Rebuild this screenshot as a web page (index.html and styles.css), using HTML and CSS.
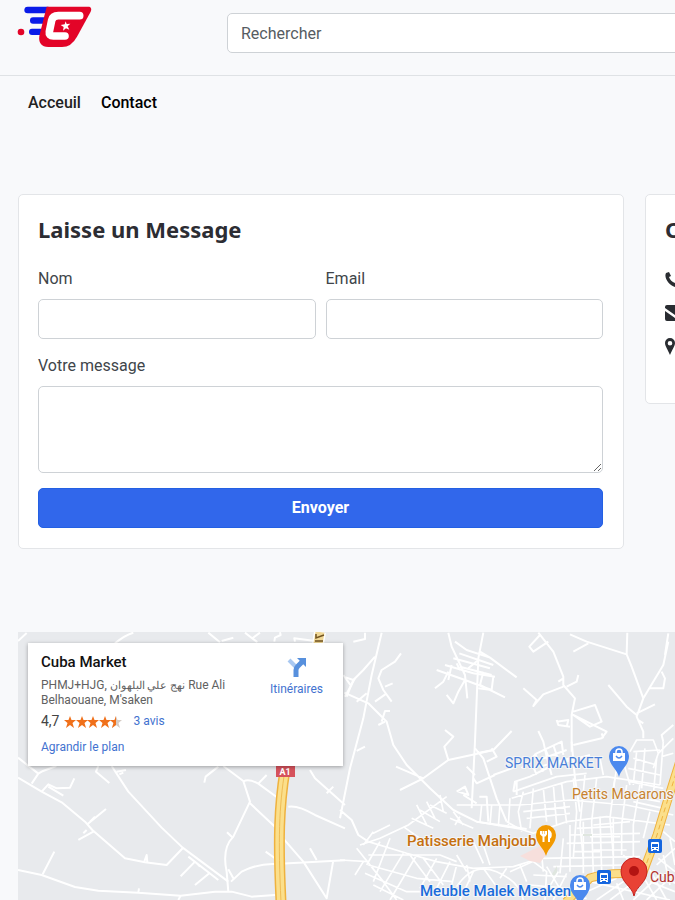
FILE: index.html
```html
<!DOCTYPE html>
<html lang="fr">
<head>
<meta charset="utf-8">
<meta name="viewport" content="width=device-width, initial-scale=1">
<title>Contact</title>
<link rel="stylesheet" href="styles.css">
</head>
<body>
<div class="page">
  <header class="header">
    <a class="logo" href="#" aria-label="Accueil">
      <svg width="76" height="44" viewBox="0 0 228 132">
        <g fill="#0a1be8"><rect x="19" y="2" width="80" height="20" rx="10"/><rect x="36" y="34" width="50" height="19" rx="9"/><rect x="33" y="68" width="50" height="19" rx="9"/></g>
        <circle cx="9" cy="78" r="10" fill="#e30428"/>
        <path fill="#e30428" d="M86 2H214Q223 6 218 17L177 92Q160 123 132 123H91Q60 122 64 90Z"/>
        <path fill="none" stroke="#fff" stroke-width="23" stroke-linecap="round" stroke-linejoin="round" d="M185 29H121Q104 29 101 43L94 77Q92 90 106 90H141"/>
        <path fill="#fff" d="M143 46l3 8 11-1-8 8 5 10-10-4-9 7 2-11-9-6 12-2z"/>
      </svg>
    </a>
    <input class="search" type="search" placeholder="Rechercher" aria-label="Rechercher">
  </header>

  <nav class="nav">
    <a href="#">Acceuil</a>
    <a class="active" href="#">Contact</a>
  </nav>

  <main class="main">
    <div class="cards">
      <form class="card">
        <h2>Laisse un Message</h2>
        <div class="fields">
          <div class="field"><label for="nom">Nom</label><input id="nom" type="text"></div>
          <div class="field"><label for="email">Email</label><input id="email" type="email"></div>
        </div>
        <div class="field"><label for="message">Votre message</label><textarea id="message"></textarea></div>
        <button class="send" type="button">Envoyer</button>
      </form>
      <aside class="card info">
        <h2>C</h2>
        <ul>
          <li><svg width="16" height="16" viewBox="0 0 16 16"><path d="M4 0 1 1C-2 7 7 17 14 15l2-3-4-3-2 2C7 10 5 8 4 5l2-1z"/></svg></li>
          <li><svg width="20" height="16" viewBox="0 0 20 16"><path d="M2 0H18Q20 0 20 2V3L10 10 0 3V2Q0 0 2 0ZM0 6l10 7 10-7v8q0 2-2 2H2q-2 0-2-2Z"/></svg></li>
          <li><svg width="10" height="17" viewBox="0 0 10 17"><path fill-rule="evenodd" d="M5 0a5 5 0 0 1 5 5c0 3-3 7-5 12C3 12 0 8 0 5a5 5 0 0 1 5-5Zm0 3a2.3 2.3 0 1 0 0 4.600 2.300 2.300 0 0 0 0-4.600Z"/></svg></li>
        </ul>
      </aside>
    </div>

    <section class="map" aria-label="Plan">
      <svg class="tiles" viewBox="18 632 930 268" preserveAspectRatio="xMinYMin slice">
        <defs>
          <path id="pin" d="M0 31C-2 23-10 19-10 10a10 10 0 0 1 20 0C10 19 2 23 0 31Z"/>
          <g id="bag"><path fill="#fff" d="M-6 7H6V15H-6Z"/><path fill="none" stroke="#fff" stroke-width="1.500" d="M-3 7V6a3 3 0 0 1 6 0V7"/><path fill="none" stroke="#4b89ee" stroke-width="1.300" d="M-3 10q3 4 6 0"/></g>
          <g id="bus"><rect x="-7" y="-7" width="14" height="14" rx="2" fill="#1566df"/><rect x="-4" y="-4" width="8" height="8" rx="1" fill="#fff"/><path fill="#1566df" d="M-3-2H3V1H-3ZM-3 2H-1V3H-3ZM1 2H3V3H1Z"/><path fill="#fff" d="M-4 4H-2V5H-4ZM2 4H4V5H2Z"/></g>
        </defs>

        <!-- western roads -->
        <g class="roads" transform="translate(15 625) scale(.3333)">
          <path d="M9 48 35 24M300 55Q330 30 355 23M580 23 615 52M620 48 655 38M690 23 725 50 712 40 735 23M778 50 780 38 797 30 795 22M840 50 838 40 900 48M985 150 1010 185M990 215 1020 160"/>
          <path d="M9 398 70 446 84 438 124 423M9 458 80 500 140 532 210 590 232 615 330 700 390 712 455 720 503 670M70 446 50 476M80 500 100 478 125 490 165 488 178 460M100 485 145 512M218 597 273 552M225 590 240 575M235 620 190 645M215 615 205 625M83 748 118 680"/>
          <path d="M250 423 243 440 283 474M290 423 340 500 440 608 503 668 640 770M305 440 333 435M313 448 325 443M520 695 610 765M540 710 497 754M540 710 555 725M583 745 540 780M388 710 395 690 397 712"/>
          <path d="M625 423 685 468 705 530 655 635Q620 670 635 740L640 800M568 473 572 455 610 425M685 470Q700 460 730 476L790 520M730 476 755 450M705 535 780 605M636 622 655 640M648 770 680 740Q730 715 780 717L990 706M640 733 655 760M9 735 80 750 180 786 250 797 370 803 497 812 600 800 650 800 710 815 780 810M370 803 372 790M497 812 490 825M807 643 865 710 935 820 955 706M820 545Q850 540 900 570L990 610M885 670 905 705M752 680 780 700M885 435 900 460 990 540M935 505 955 485"/>
        </g>

        <!-- northern and central roads -->
        <g class="roads" transform="translate(340 625) scale(.3333)">
          <path d="M125 23 95 150 70 280 30 430 0 580M105 95 70 135 40 165 20 215M17 157 40 165M40 50 75 42V23M183 85 165 110 125 135 115 160 130 195 155 230M135 185 158 175M105 230 140 205M13 203 85 235 115 265 140 290 160 360 200 420 270 490 340 555 410 590 560 612M50 230 80 205M125 290 135 258 150 258M115 300 135 290M168 425 250 460 325 405 405 388 460 375 515 318M180 495 250 460M325 405 313 365 340 335 315 315M50 378 75 365M0 555 35 585 55 630 85 650"/>
          <path d="M325 23 335 65 375 150 382 220M430 23 415 100 405 350 395 550M345 50 380 75 450 98 530 157M358 85 460 120M315 120 400 145 465 155M340 100 450 130M360 125 455 150M290 135 375 165 455 195M385 130 415 105M335 120 325 165M430 140 420 180 495 217M460 155 455 195 415 190M350 115 360 135M375 165 355 200 340 235 320 210M285 190 310 170 325 140M420 80 450 98"/>
          <path d="M595 23 640 80 670 155 670 180 705 220 695 270 695 380M600 30 568 65 580 80 625 50M670 185 610 208 580 243 590 225 550 190M670 160 655 170M680 185 710 170 715 150M700 260 765 240 785 290 750 305 700 270 800 320 785 340 700 360M650 285 655 300 690 305M680 305 685 285 650 290M790 340 785 325"/>
          <path d="M690 28 740 50 860 88 875 125 910 220 890 275 910 320 910 340M860 88 862 23M700 80 745 55M985 50 970 120 910 220M985 25 975 90M930 190 970 190 975 160 965 140M805 180 860 245 890 270M890 265 945 238M910 295 895 285M970 350 965 330 1000 300"/>
          <path d="M405 370 430 400 470 520 500 590M410 385 460 375M440 410 470 395 455 370M465 450 410 475 400 460M405 450 380 425M460 450 530 425M350 500 375 485 385 510 355 500M370 510 410 535M418 515 440 515 445 590M595 318 610 350 620 395 635 450M695 350 705 460 720 560M520 500 525 470 570 455 640 420 750 390M570 400 590 450M530 470 530 510M545 430 590 385 665 350 670 390M585 385 610 440M615 370 640 430M640 360 660 420M595 405 680 375M600 425 690 400"/>
        </g>

        <!-- town street grid -->
        <g class="streets" transform="translate(340 625) scale(.3333)">
          <path d="M350 540 540 540 690 525 860 540 1000 570M410 590 540 612 580 625 680 590 800 575 990 600M515 520 680 470 800 455 960 480M520 500 650 455 740 445M550 560 690 545M560 580 690 565M610 490 620 590M640 480 650 600M665 475 680 595M700 460 710 560 700 700M735 450 720 600 730 700M770 460 755 590 760 745M825 460 810 580 820 690M860 480 845 600 845 690M900 480 880 600 880 700M550 500 535 560 545 620M580 490 570 610M425 540 420 590M455 540 450 600M480 540 475 605M510 520 505 600M500 590 535 610"/>
          <path d="M690 630 900 625M680 655 900 650M600 700 900 695M640 725 850 720M690 600V740M730 590V745M780 575 785 735M820 580V735M670 640 660 745M760 600 870 590M710 610 820 605M750 635 840 635M760 675 860 675M700 680 780 680"/>
          <path d="M870 380 890 345 940 345 955 385 940 430M880 400 950 420M865 430 960 450M870 470 970 490M890 380 880 480M915 370 905 490M950 400 940 510M970 350 960 480M880 380 960 375M955 385 1000 340M965 395 1000 385M850 410 870 480M830 430 820 490M780 400 790 450M850 510 960 530M880 530 970 550"/>
          <path d="M85 650 200 685 290 710 400 730 520 725 600 700M60 660 120 640 205 600 320 515M190 605 240 640M215 580 280 610M240 555 300 590M270 540 320 565M230 540 260 600M260 530 285 580M300 510 310 560M340 560 370 600M330 580 400 610M360 575 345 600M85 690 200 690 300 690 350 710M120 650 80 720M150 640 100 770M190 685 120 800M230 690 150 825M210 690 270 770M250 700 310 780M290 700 240 790M330 710 280 810M350 720 330 800M380 720 390 770M85 720 230 760 340 770M75 745 200 800 280 800M100 780 190 825M50 670 130 770 170 825M45 750 70 710M350 690 380 740M400 650 430 715M430 660 450 720M100 625 150 600M70 660 100 620"/>
          <path d="M350 785Q400 710 470 740T550 825M400 740 360 825M430 730 470 785M500 730 480 760M510 740 600 700M540 720 560 770M580 710 620 740 615 825M600 640 610 740M620 725 680 825M655 740 620 800M680 745 640 825M580 750 680 755M570 780 680 790M610 810 740 820"/>
          <path d="M750 770 990 825M740 800 830 760M770 825 850 770M810 825 870 780M850 825 830 775M880 825 960 750M920 825 1000 750M950 825 910 755M980 825 930 735M930 770 1005 800M960 745 1005 775M955 700 1005 740M950 720 1005 670M970 690 990 780M990 640 1005 720M970 620 1005 650M850 690 880 720M930 560 910 640"/>
          <path d="M0 705 85 710"/>
        </g>

        <path fill="#f7dfdc" d="M520 856 540 846 547 853 540 863 530 861Z"/>
        <path fill="#dfe6df" d="M583 834h9v2h-9zM552 874l5-8v6l-3 4z"/>

        <!-- motorway A1 and main road -->
        <g fill="none">
          <path stroke="#efb23e" stroke-width="11" d="M285 770C279 806 278 840 281 902"/>
          <path stroke="#fbdf8b" stroke-width="8" d="M285 770C279 806 278 840 281 902"/>
          <path stroke="#efbc55" d="M285 770C279 806 278 840 281 902"/>
          <path stroke="#efb23e" stroke-width="9" d="M690 730Q672 785 657 835L642 875Q612 871 590 878L566 902"/>
          <path stroke="#fbdf8b" stroke-width="7" d="M690 730Q672 785 657 835L642 875Q612 871 590 878L566 902"/>
          <path stroke="#efb23e" stroke-dasharray="5 4" d="M690 730Q672 785 657 835L646 865"/>
          <path stroke="#fff" stroke-width="12" d="M320 632 318 644"/>
          <path stroke="#f0d795" stroke-width="9" d="M320 632 318 644"/>
          <path stroke="#725421" stroke-width="1.500" d="M315 641H323M316 634V638L324 635"/>
        </g>
        <rect x="276" y="765" width="19" height="12" fill="#d6525c"/>
        <text class="shield" x="285" y="775" text-anchor="middle">A1</text>

        <g class="places">
          <text x="505" y="768" fill="#4a7fd8">SPRIX MARKET</text>
          <text x="572" y="799" fill="#c8822f">Petits Macarons</text>
          <text class="strong" x="407" y="846" fill="#c5700f">Patisserie Mahjoub</text>
          <text class="strong" x="420" y="896" fill="#1a6cdb">Meuble Malek Msaken</text>
          <text x="650" y="882" fill="#b3322c">Cuba Market</text>
        </g>

        <use href="#pin" x="619" y="746" fill="#4b89ee"/><use href="#bag" x="619" y="746"/>
        <use href="#pin" x="580" y="875" fill="#4b89ee"/><use href="#bag" x="580" y="875"/>
        <use href="#pin" x="546" y="825" fill="#f29900"/>
        <path fill="none" stroke="#fff" stroke-width="2" d="M541 831V834Q544 838 546 834V831M543.500 831V842M549 842V831Q552 833 550 838"/>
        <use href="#bus" x="604" y="877"/><use href="#bus" x="655" y="846"/>
        <path fill="#e94235" stroke="#c5221f" d="M634 896C632 886 621 883 621 871a13 13 0 0 1 26 0C647 883 636 886 634 896Z"/>
        <circle cx="634" cy="871" r="5" fill="#b31412"/>
      </svg>

      <div class="place">
        <div class="details">
          <h3>Cuba Market</h3>
          <address>PHMJ+HJG, <span lang="ar">نهج علي البلهوان</span> Rue Ali Belhaouane, M'saken</address>
          <div class="rating">
            <span class="score">4,7</span>
            <svg width="58" height="12" viewBox="0 0 58 12" role="img" aria-label="4,7 sur 5">
              <defs><path id="star" d="m6 0 1.500 4H12L8.500 7 10 12 6 9 2 12 3.500 7 0 4H4.500Z"/><clipPath id="half"><path d="M0 0H52V12H0Z"/></clipPath></defs>
              <use href="#star" x="46" fill="#d5cbc4"/>
              <g fill="#f0701a" clip-path="url(#half)"><use href="#star"/><use href="#star" x="12"/><use href="#star" x="23"/><use href="#star" x="35"/><use href="#star" x="46"/></g>
            </svg>
            <a href="#">3 avis</a>
          </div>
          <a href="#">Agrandir le plan</a>
        </div>
        <a class="directions" href="#">
          <svg width="20" height="20" viewBox="0 0 20 20"><path fill="none" stroke="#a9c8f1" stroke-width="4" d="M2 3 9 10"/><path fill="none" stroke="#5790dd" stroke-width="5" d="M9 20V13Q9 11 11 9L15 5"/><path fill="#5790dd" d="M10 1H19V10Z"/></svg>
          Itinéraires
        </a>
      </div>
    </section>
  </main>
</div>
</body>
</html>
```
FILE: styles.css
```css
* { box-sizing: border-box; }

body {
  margin: 0;
  overflow: hidden;
  background: #f8f9fb;
  color: #40454a;
  font: 16px/24px Roboto, "Noto Sans", sans-serif;
}

a { color: #4272cf; text-decoration: none; }
h2, h3, ul { margin: 0; padding: 0; }

.page {
  display: flex;
  flex-direction: column;
  min-width: 966px;
  min-height: 100vh;
}

.header {
  display: flex;
  gap: 133px;
  height: 76px;
  padding: 6px 18px 0;
  border-bottom: 1px solid #dfe2e5;
}

.logo svg { display: block; overflow: visible; }

input, textarea {
  display: block;
  width: 100%;
  height: 40px;
  padding: 0 13px;
  border: 1px solid #ced2d6;
  border-radius: 5px;
  background: #fff;
  font: inherit;
}

.search { flex: 1; margin-top: 7px; }
.search::placeholder { color: #565c62; opacity: 1; }

.nav {
  display: flex;
  gap: 20px;
  padding: 15px 28px;
}

.nav a { color: #222; font-weight: 500; }
.nav .active { color: #000; }

.main {
  display: flex;
  flex: 1;
  flex-direction: column;
  gap: 83px;
  padding: 64px 18px 0;
}

.cards {
  display: grid;
  grid-template-columns: 2fr 1fr;
  align-items: start;
  gap: 21px;
}

.card {
  display: grid;
  align-content: start;
  gap: 15px;
  padding: 18px 20px 20px 19px;
  border: 1px solid #e3e5e8;
  border-radius: 5px;
  background: #fff;
}

h2 {
  margin-bottom: 7px;
  color: #2c2d33;
  font: 700 22px/32px "Noto Sans", sans-serif;
}

.fields {
  display: grid;
  grid-template-columns: 1fr 1fr;
  gap: 10px;
}

.field label { display: block; margin-bottom: 8px; }
.field textarea { height: 87px; resize: vertical; }

.send {
  height: 40px;
  border: 1px solid #2360e3;
  border-radius: 5px;
  background: #3167eb;
  color: #fff;
  font: 700 16px/24px Roboto, sans-serif;
}

.info { min-height: 210px; }

.info ul {
  display: grid;
  gap: 16px;
  padding-top: 5px;
  list-style: none;
}

.info li { height: 17px; }
.info svg { display: block; fill: #292c31; }

.map {
  position: relative;
  flex: 1;
  min-height: 268px;
  overflow: hidden;
  background: #e8eaed;
}

.tiles {
  position: absolute;
  inset: 0;
  width: 100%;
  height: 100%;
}

.roads, .streets {
  fill: none;
  stroke: #fff;
  stroke-width: 6;
  stroke-linejoin: round;
}

.streets { stroke-width: 5; }

.places {
  font: 14px Roboto, sans-serif;
  paint-order: stroke;
  stroke: #f5f6f7;
  stroke-width: 2px;
}

.places .strong { font-size: 15px; font-weight: 500; }
.shield { fill: #fff; font: 700 9px Roboto, sans-serif; }

.place {
  position: absolute;
  top: 11px;
  left: 10px;
  display: flex;
  justify-content: space-between;
  width: 315px;
  height: 123px;
  padding: 10px 20px 10px 13px;
  background: #fff;
  box-shadow: 0 1px 4px #0005;
  font-size: 12px;
  line-height: 15px;
}

.details { width: 195px; }

h3 {
  color: #111;
  font: 500 15px/18px Roboto, sans-serif;
}

address {
  margin-top: 7px;
  color: #616161;
  font-style: normal;
}

address span { font-size: 11px; line-height: 1; }

.rating {
  display: flex;
  align-items: center;
  gap: 4px;
  margin: 6px 0 11px;
}

.rating a { margin-left: 8px; }
.score { color: #444; font-size: 14px; }

.directions {
  display: flex;
  flex-direction: column;
  align-items: center;
  gap: 5px;
  padding-top: 4px;
}
```
